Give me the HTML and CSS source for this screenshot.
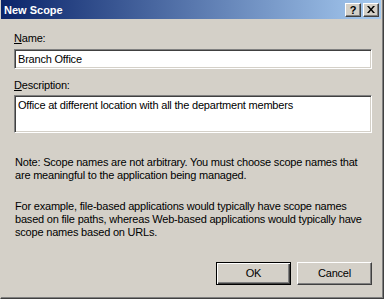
FILE: index.html
```html
<!DOCTYPE html>
<html>
<head>
<meta charset="utf-8">
<link rel="stylesheet" href="styles.css">
</head>
<body>
<div class="window">
  <div class="titlebar">
    <span class="title">New Scope</span>
    <div class="tbtns">
      <span class="tbtn help">?</span>
      <span class="tbtn close"><svg width="8" height="7" viewBox="0 0 8 7"><path d="M0 0h2l2 2.5L6 0h2L5 3.5 8 7H6L4 4.5 2 7H0l3-3.5z" fill="#000"/></svg></span>
    </div>
  </div>
  <div class="body">
    <div class="label lbl-name"><u>N</u>ame:</div>
    <div class="field input">Branch Office</div>
    <div class="label lbl-desc"><u>D</u>escription:</div>
    <div class="field textarea">Office at different location with all the department members</div>
    <p class="note">Note: Scope names are not arbitrary. You must choose scope names that are meaningful to the application being managed.</p>
    <p class="note note2">For example, file-based applications would typically have scope names based on file paths, whereas Web-based applications would typically have scope names based on URLs.</p>
    <div class="buttons">
      <div class="btn default">OK</div>
      <div class="btn">Cancel</div>
    </div>
  </div>
</div>
</body>
</html>
```
FILE: styles.css
```css
html, body {
  margin: 0;
  padding: 0;
  background: #ffffff;
}
body {
  font-family: "Liberation Sans", Arial, sans-serif;
  font-size: 11px;
  letter-spacing: -0.2px;
  color: #000;
  width: 387px;
  height: 301px;
  overflow: hidden;
}
.window {
  width: 384px;
  height: 299px;
  box-sizing: border-box;
  background: #d4d0c8;
  border-right: 1px solid #404040;
  border-bottom: 1px solid #404040;
  border-left: 1px solid #d4d0c8;
  box-shadow: inset -1px -1px 0 #808080;
  display: flex;
  flex-direction: column;
}
.titlebar {
  height: 19px;
  margin: 0 2px 0 0;
  background: linear-gradient(to right, #0a246a, #a6caf0);
  display: flex;
  align-items: center;
  justify-content: space-between;
}
.title {
  color: #fff;
  font-weight: bold;
  letter-spacing: 0;
  padding-left: 3px;
  line-height: 18px;
}
.tbtns {
  display: flex;
  padding-right: 2px;
}
.tbtn {
  width: 16px;
  height: 14px;
  box-sizing: border-box;
  background: #d4d0c8;
  border-top: 1px solid #fff;
  border-left: 1px solid #fff;
  border-right: 1px solid #404040;
  border-bottom: 1px solid #404040;
  box-shadow: inset -1px -1px 0 #808080;
  display: flex;
  align-items: center;
  justify-content: center;
  font-weight: bold;
  font-size: 11px;
  line-height: 12px;
  letter-spacing: 0;
}
.help {
  margin-right: 2px;
}
.body {
  padding: 0 11px 0 13px;
  display: flex;
  flex-direction: column;
  flex: 1;
}
.label {
  line-height: 13px;
}
.lbl-name {
  margin-top: 13px;
}
.lbl-desc {
  margin-top: 10px;
}
.field {
  background: #fff;
  box-sizing: border-box;
  border-top: 1px solid #808080;
  border-left: 1px solid #808080;
  border-right: 1px solid #fff;
  border-bottom: 1px solid #fff;
  box-shadow: inset 1px 1px 0 #404040, inset -1px -1px 0 #d4d0c8;
  padding: 3px 3px 0 3px;
  line-height: 13px;
}
.input {
  margin-top: 4px;
  height: 20px;
}
.textarea {
  margin-top: 3px;
  height: 38px;
}
.note {
  margin: 23px 0 0 1px;
  line-height: 13px;
}
.note2 {
  margin-top: 18px;
}
.buttons {
  margin-top: auto;
  margin-bottom: 13px;
  display: flex;
  justify-content: flex-end;
  gap: 6px;
}
.btn {
  width: 75px;
  height: 23px;
  box-sizing: border-box;
  border-top: 1px solid #fff;
  border-left: 1px solid #fff;
  border-right: 1px solid #404040;
  border-bottom: 1px solid #404040;
  box-shadow: inset -1px -1px 0 #808080;
  display: flex;
  align-items: center;
  justify-content: center;
  line-height: 13px;
}
.btn.default {
  border: 1px solid #000;
  box-shadow: inset 1px 1px 0 #fff, inset -1px -1px 0 #404040, inset -2px -2px 0 #808080;
}
```
